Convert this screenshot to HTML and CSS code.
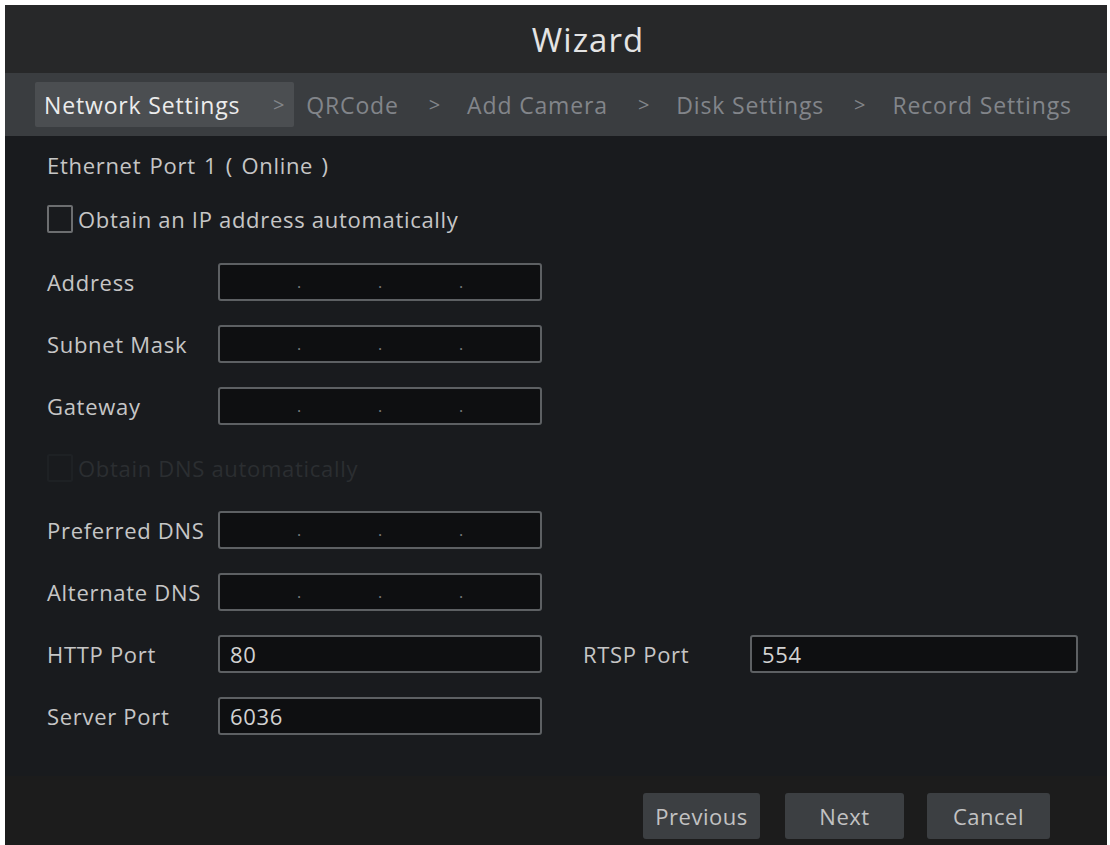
FILE: index.html
```html
<!DOCTYPE html>
<html>
<head>
<meta charset="utf-8">
<link rel="stylesheet" href="styles.css">
</head>
<body>
<div class="panel">
  <div class="header"><span class="title">Wizard</span></div>
  <div class="tabs">
    <div class="tab active">Network Settings</div>
    <span class="sep first">&gt;</span>
    <div class="tab">QRCode</div>
    <span class="sep">&gt;</span>
    <div class="tab">Add Camera</div>
    <span class="sep">&gt;</span>
    <div class="tab">Disk Settings</div>
    <span class="sep">&gt;</span>
    <div class="tab">Record Settings</div>
  </div>
  <div class="content">
    <div class="section-title">Ethernet Port 1 ( Online )</div>
    <div class="check-row">
      <span class="checkbox"></span>
      <span>Obtain an IP address automatically</span>
    </div>
    <div class="form">
      <div class="row">
        <span class="label">Address</span>
        <div class="input ip"><span></span><i>.</i><span></span><i>.</i><span></span><i>.</i><span></span></div>
      </div>
      <div class="row">
        <span class="label">Subnet Mask</span>
        <div class="input ip"><span></span><i>.</i><span></span><i>.</i><span></span><i>.</i><span></span></div>
      </div>
      <div class="row">
        <span class="label">Gateway</span>
        <div class="input ip"><span></span><i>.</i><span></span><i>.</i><span></span><i>.</i><span></span></div>
      </div>
      <div class="row faded">
        <span class="checkbox dim"></span>
        <span>Obtain DNS automatically</span>
      </div>
      <div class="row">
        <span class="label">Preferred DNS</span>
        <div class="input ip"><span></span><i>.</i><span></span><i>.</i><span></span><i>.</i><span></span></div>
      </div>
      <div class="row">
        <span class="label">Alternate DNS</span>
        <div class="input ip"><span></span><i>.</i><span></span><i>.</i><span></span><i>.</i><span></span></div>
      </div>
      <div class="row">
        <span class="label">HTTP Port</span>
        <div class="input">80</div>
        <span class="label label2">RTSP Port</span>
        <div class="input wide">554</div>
      </div>
      <div class="row">
        <span class="label">Server Port</span>
        <div class="input">6036</div>
      </div>
    </div>
  </div>
  <div class="footer">
    <button class="btn btn-prev">Previous</button>
    <button class="btn btn-next">Next</button>
    <button class="btn btn-cancel">Cancel</button>
  </div>
</div>
</body>
</html>
```

FILE: styles.css
```css
html, body {
  margin: 0;
  padding: 0;
  background: #ffffff;
}
body {
  width: 1110px;
  height: 845px;
  overflow: hidden;
  font-family: "Open Sans", "Noto Sans", sans-serif;
}
.panel {
  margin: 5px 3px 0 5px;
  height: 840px;
  background: #191b1e;
  display: flex;
  flex-direction: column;
}
.header {
  height: 68px;
  background: #272829;
  color: #e4e4e4;
  font-size: 33px;
  letter-spacing: 1px;
  display: flex;
  align-items: center;
  justify-content: center;
  padding-left: 64px;
  box-sizing: border-box;
}
.tabs {
  height: 63px;
  background: #3a3d40;
  display: flex;
  align-items: center;
  padding-left: 30px;
  font-size: 23px;
  letter-spacing: 0.85px;
  color: #82858a;
}
.tab {
  height: 45px;
  display: flex;
  align-items: center;
}
.tab.active {
  background: #4b4e51;
  color: #ececec;
  width: 259px;
  padding-left: 9px;
  box-sizing: border-box;
  border-radius: 2px;
}
.sep {
  margin: 0 26px 0 30px;
  font-size: 20px;
}
.sep.first {
  margin-left: -21px;
  margin-right: 21px;
}
.content {
  flex: 1;
  padding: 14px 0 0 42px;
  color: #c6c6c6;
  font-size: 22px;
  letter-spacing: 0.7px;
}
.section-title {
  height: 30px;
  line-height: 30px;
  word-spacing: 2px;
}
.check-row {
  margin-top: 24px;
  height: 30px;
  display: flex;
  align-items: center;
  gap: 5px;
}
.checkbox {
  width: 26px;
  height: 28px;
  border: 2px solid #6c6e70;
  border-radius: 2px;
  box-sizing: border-box;
  display: inline-block;
}
.form {
  margin-top: 29px;
  display: flex;
  flex-direction: column;
  gap: 24px;
}
.row {
  height: 38px;
  display: flex;
  align-items: center;
}
.label {
  width: 171px;
}
.label2 {
  width: 167px;
  margin-left: 41px;
}
.input {
  width: 324px;
  height: 38px;
  box-sizing: border-box;
  border: 2px solid #5d6063;
  border-radius: 3px;
  background: #0e0f11;
  color: #d2d2d2;
  display: flex;
  align-items: center;
  padding-left: 10px;
}
.input.wide {
  width: 328px;
}
.ip {
  padding: 0;
}
.ip span {
  flex: 1;
}
.ip i {
  font-style: normal;
  color: #7a7c7e;
  font-size: 16px;
  width: 4px;
  text-align: center;
}
.row.faded {
  color: #2b2e31;
  gap: 5px;
}
.checkbox.dim {
  border-color: #1e2124;
}
.footer {
  height: 69px;
  background: #1c1c1c;
  display: flex;
  justify-content: flex-end;
  align-items: flex-start;
  padding: 17px 57px 0 0;
  box-sizing: border-box;
  gap: 25px;
}
.btn {
  height: 46px;
  border: none;
  border-radius: 3px;
  background: #3c3f42;
  color: #c2c2c2;
  font-family: "Open Sans", "Noto Sans", sans-serif;
  font-size: 22px;
  letter-spacing: 0.5px;
  padding: 0;
}
.btn-prev { width: 117px; }
.btn-next { width: 119px; }
.btn-cancel { width: 123px; margin-left: -2px; }
```
